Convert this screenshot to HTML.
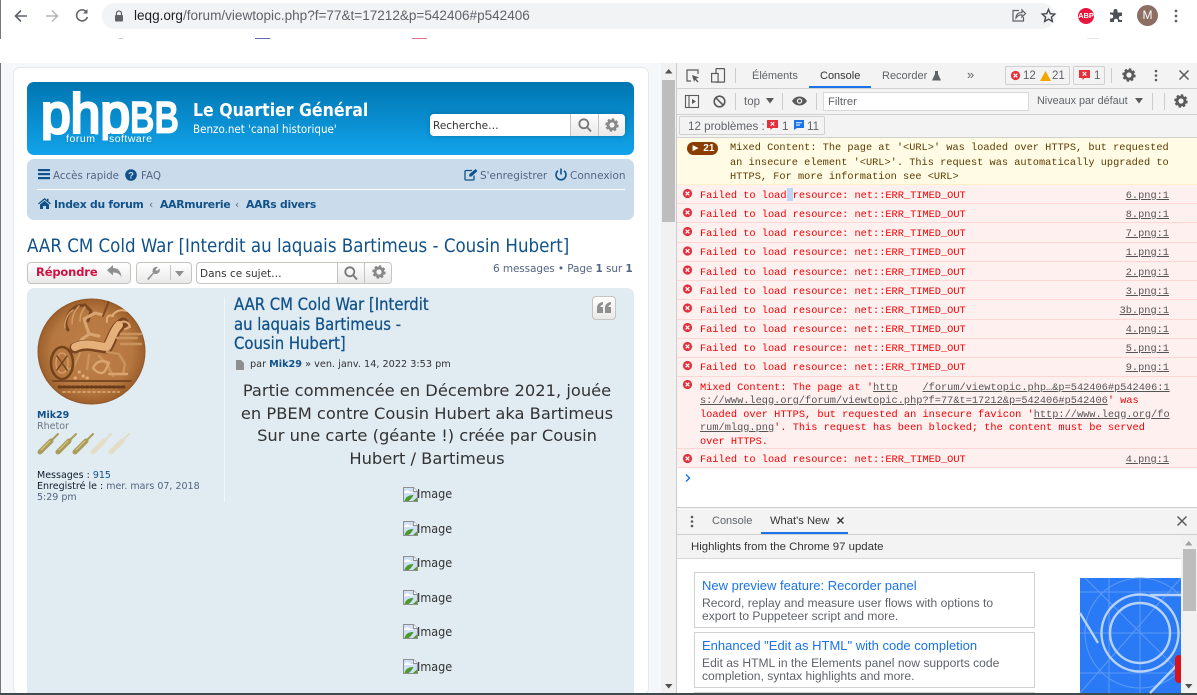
<!DOCTYPE html>
<html><head><meta charset="utf-8"><title>leqg.org</title>
<style>
html,body{margin:0;padding:0;width:1197px;height:695px;overflow:hidden;background:#fff}
.a{position:absolute}
.t{position:absolute;white-space:nowrap;line-height:16px}
.v{font-family:"DejaVu Sans",sans-serif}
.c{font-family:"DejaVu Sans Condensed","Liberation Sans",sans-serif}
.s{font-family:"Liberation Sans",sans-serif}
.m{font-family:"Liberation Mono",monospace;font-size:10.3px;color:#f00000}
.d{font-family:"Liberation Sans",sans-serif;font-size:11px;color:#5f6368}
.row{position:absolute;left:677px;width:520px;background:#fff0f0;border-bottom:1px solid #ffd6d6;box-sizing:border-box}
.lnk{position:absolute;white-space:nowrap;line-height:16px;font-family:"Liberation Mono",monospace;font-size:10.3px;color:#555;text-decoration:underline;text-align:right;right:28px}
svg{position:absolute;overflow:visible}
u{text-decoration:underline}
b{font-weight:bold}
</style></head><body>
<svg width="0" height="0" style="left:0;top:0"><defs>
<g id="bi"><path d="M.5.5h10l4 4v10H.5z" fill="#cfdff5" stroke="#8f8f8f"/><path d="M1 5l3-2 4 2 2 0v1H1z" fill="#fff"/><path d="M1.500 14c1-4 4-6 9-6-1 2-3 5-5 6z" fill="#4c9a2a"/><path d="M10 14l4-3.500V14z" fill="#4c9a2a"/><path d="M10.500 .5v4h4" fill="#fff" stroke="#8f8f8f"/></g>
<g id="er"><circle cx="4.500" cy="4.500" r="4.600" fill="#e5303c"/><path d="M2.700 2.700l3.600 3.600M6.300 2.700 2.700 6.300" stroke="#fff" stroke-width="1.300"/></g>
<g id="gear"><circle cx="7" cy="7" r="4" fill="none" stroke="currentColor" stroke-width="2.800"/><circle cx="7" cy="7" r="5.800" fill="none" stroke="currentColor" stroke-width="1.800" stroke-dasharray="2.500 2"/></g>
</defs></svg>
<!-- browser chrome -->
<div class="a" style="left:0;top:0;width:1197px;height:39px;background:#fff"></div>
<div class="a" style="left:0;top:0;width:1px;height:39px;background:#777"></div>
<div class="a" style="left:102px;top:3px;width:953px;height:26px;border-radius:13px;background:#f1f3f4"></div>
<svg style="left:14px;top:9px" width="16" height="14" fill="none" stroke="#5f6368" stroke-width="1.6"><path d="M13 7H2M7 1.500 1.500 7 7 12.500"/></svg>
<svg style="left:44px;top:9px" width="16" height="14" fill="none" stroke="#b4b7ba" stroke-width="1.5"><path d="M2 7h11M8 1.500 13.500 7 8 12.500"/></svg>
<svg style="left:74px;top:8px" width="16" height="15" fill="none" stroke="#5f6368" stroke-width="1.6"><path d="M12.500 4A5.500 5.500 0 1 0 13.400 9"/><path d="M13.500 1v4.500H9" fill="#5f6368" stroke="none"/></svg>
<svg style="left:114px;top:10px" width="10" height="12"><path d="M2.500 5V3.500a2.500 2.500 0 0 1 5 0V5" fill="none" stroke="#5f6368" stroke-width="1.200"/><rect x="1" y="5" width="8" height="6.500" rx="1" fill="#5f6368"/></svg>
<div class="t s" style="left:134px;top:8px;font-size:13.55px;color:#5f6368"><span style="color:#202124">leqg.org</span>/forum/viewtopic.php?f=77&amp;t=17212&amp;p=542406#p542406</div>
<svg style="left:1011px;top:8px" width="15" height="15" fill="none" stroke="#5f6368" stroke-width="1.200"><path d="M8 2.500H2v10.500h10.500V9"/><path d="M5 10c0-4 3-5.500 6-5.500V2l3.500 3.500L11 9V6.800C8.500 6.800 6.500 7.500 5 10z"/></svg>
<svg style="left:1041px;top:8px" width="15" height="15" fill="none" stroke="#44474a" stroke-width="1.400"><path d="M7.500 1.500 9.300 5.700l4.500.4-3.400 3 1 4.400-3.900-2.300-3.900 2.300 1-4.400-3.400-3 4.500-.4z"/></svg>
<div class="a" style="left:1078px;top:8px;width:16px;height:16px;border-radius:50%;background:#e8173f"></div>
<div class="t s" style="left:1078px;top:8px;width:16px;text-align:center;font-size:7.500px;font-weight:bold;color:#fff">ABP</div>
<svg style="left:1109px;top:8px" width="15" height="15" fill="#4d5156"><path d="M1 4.500h3.500V3a2 2 0 0 1 4 0v1.500H13V8h-1.200a2 2 0 0 0 0 4H13v2H9v-1.200a2 2 0 0 0-4 0V14H1v-3.500h1.200a2 2 0 0 0 0-4H1z"/></svg>
<div class="a" style="left:1137px;top:5px;width:21px;height:21px;border-radius:50%;background:#8d6e63"></div>
<div class="t s" style="left:1137px;top:7px;width:21px;text-align:center;font-size:12px;color:#fff">M</div>
<svg style="left:1174px;top:9px" width="4" height="14" fill="#5f6368"><circle cx="2" cy="2" r="1.400"/><circle cx="2" cy="7" r="1.400"/><circle cx="2" cy="12" r="1.400"/></svg>
<div class="a" style="left:119px;top:38px;width:4px;height:1px;background:#bcc8e8"></div>
<div class="a" style="left:255px;top:38px;width:15px;height:1px;background:#5a6bb0"></div>
<div class="a" style="left:412px;top:38px;width:15px;height:1px;background:#e0708a"></div>
<div class="a" style="left:1087px;top:38px;width:12px;height:1px;background:#e8e8e8"></div>

<!-- page -->
<div class="a" style="left:0;top:63px;width:662px;height:632px;background:#f5f7fa"></div>
<div class="a" style="left:0;top:63px;width:1px;height:632px;background:#777"></div>
<div class="a" style="left:13px;top:67px;width:636px;height:628px;background:#fff;border:1px solid #e6e9ed;border-radius:7px;box-sizing:border-box"></div>
<!-- header -->
<div class="a" style="left:27px;top:82px;width:607px;height:73px;border-radius:7px;background:linear-gradient(#0076b1,#12a3eb)"></div>
<svg style="left:27px;top:82px" width="170" height="73" fill="#fff">
<defs><clipPath id="c"><rect x="0" y="0" width="170" height="58.500"/></clipPath></defs>
<text clip-path="url(#c)" x="14" y="51" font-family="Liberation Sans" font-size="56" stroke="#fff" stroke-width="3" textLength="89" lengthAdjust="spacingAndGlyphs">php</text>
<text x="103" y="51" font-family="Liberation Sans" font-size="45" font-weight="bold" stroke="#fff" stroke-width=".8" textLength="49" lengthAdjust="spacingAndGlyphs">BB</text>
<rect x="38" y="52" width="30" height="10" fill="#0d98dc"/>
<rect x="81" y="52" width="45" height="10" fill="#0d98dc"/>
<text x="39" y="60" font-family="Liberation Sans" font-size="10.500" textLength="29">forum</text>
<text x="82" y="60" font-family="Liberation Sans" font-size="10.500" textLength="43">software</text>
</svg>
<div class="t c" style="left:193px;top:103px;font-size:17.500px;font-weight:bold;color:#fff">Le Quartier Général</div>
<div class="t c" style="left:193px;top:121px;font-size:11.500px;color:#fff">Benzo.net 'canal historique'</div>
<div class="a" style="left:430px;top:114px;width:195px;height:22px;background:#fff;border-radius:4px;box-shadow:0 0 6px rgba(0,0,0,.2)"></div>
<div class="a" style="left:570px;top:114px;width:55px;height:22px;border-radius:0 4px 4px 0;background:linear-gradient(#fff,#e9e9e9)"></div>
<div class="a" style="left:570px;top:114px;width:1px;height:22px;background:#c7c3bf"></div>
<div class="a" style="left:598px;top:114px;width:1px;height:22px;background:#c7c3bf"></div>
<div class="t v" style="left:433px;top:118px;font-size:10.500px;color:#333">Recherche…</div>
<svg style="left:578px;top:118px" width="14" height="14" fill="none" stroke="#777" stroke-width="1.800"><circle cx="5.800" cy="5.800" r="4.500"/><path d="M9 9l4 4.500"/></svg>
<svg style="left:605px;top:118px;color:#888" width="14" height="14"><use href="#gear"/></svg>
<!-- nav -->
<div class="a" style="left:27px;top:159px;width:607px;height:61px;border-radius:7px;background:#cadceb"></div>
<div class="a" style="left:37px;top:189px;width:588px;height:1px;background:#fff"></div>
<svg style="left:38px;top:169px" width="12" height="11" fill="#105289"><rect width="12" height="2.200"/><rect y="4" width="12" height="2.200"/><rect y="8" width="12" height="2.200"/></svg>
<div class="t v" style="left:53px;top:168px;font-size:10.300px;color:#536482">Accès rapide</div>
<svg style="left:125px;top:169px" width="12" height="12"><circle cx="6" cy="6" r="5.800" fill="#105289"/><text x="6" y="9.500" text-anchor="middle" font-size="9.500" font-weight="bold" fill="#cadceb" font-family="Liberation Sans">?</text></svg>
<div class="t v" style="left:141px;top:168px;font-size:10.300px;color:#536482">FAQ</div>
<svg style="left:464px;top:168px" width="14" height="13" fill="none" stroke="#105289" stroke-width="1.300"><path d="M10 7.500V11a1 1 0 0 1-1 1H2a1 1 0 0 1-1-1V3.500a1 1 0 0 1 1-1h6"/><path d="M5 8.500 5.500 6 11.500 1l2 2-6 5.500z" fill="#105289" stroke="none"/></svg>
<div class="t v" style="left:480px;top:168px;font-size:10.500px;color:#536482">S'enregistrer</div>
<svg style="left:555px;top:168px" width="12" height="13" fill="none" stroke="#105289" stroke-width="1.600"><path d="M6 .5v6"/><path d="M3 2.800a5 5 0 1 0 6 0"/></svg>
<div class="t v" style="left:570px;top:168px;font-size:10.500px;color:#536482">Connexion</div>
<svg style="left:38px;top:198px" width="13" height="11" fill="#105289"><path d="M6.500 0 0 5.500l.8.900L6.500 1.700l5.700 4.700.8-.9-2.500-2.100V.8H9v1.200z"/><path d="M2 6.500 6.500 2.800 11 6.500V11H8V8H5v3H2z"/></svg>
<div class="t v" style="left:54px;top:197px;font-size:10.800px;font-weight:bold;color:#105289;letter-spacing:-.25px">Index du forum</div>
<div class="t v" style="left:149px;top:197px;font-size:10.500px;color:#5a6b80">‹</div>
<div class="t v" style="left:160px;top:197px;font-size:10.800px;font-weight:bold;color:#105289;letter-spacing:-.25px">AARmurerie</div>
<div class="t v" style="left:235px;top:197px;font-size:10.500px;color:#5a6b80">‹</div>
<div class="t v" style="left:246px;top:197px;font-size:10.800px;font-weight:bold;color:#105289;letter-spacing:-.25px">AARs divers</div>
<!-- title -->
<div class="t c" style="left:27px;top:239px;font-size:18.550px;color:#105289">AAR CM Cold War [Interdit au laquais Bartimeus - Cousin Hubert]</div>
<!-- buttons -->
<div class="a" style="left:27px;top:262px;width:104px;height:22px;box-sizing:border-box;border:1px solid #c7c3bf;border-radius:4px;background:linear-gradient(#fff,#e9e9e9)"></div>
<div class="t v" style="left:36px;top:264px;font-size:11.500px;font-weight:bold;color:#d31141;letter-spacing:-.15px">Répondre</div>
<svg style="left:107px;top:265px" width="15" height="13" fill="#8f8f8f"><path d="M6 0v3c5 0 8 3 8.500 9.500C13 9 10.500 7.500 6 7.500v3L0 5.200z"/></svg>
<div class="a" style="left:136px;top:262px;width:56px;height:22px;box-sizing:border-box;border:1px solid #c7c3bf;border-radius:4px;background:linear-gradient(#fff,#e9e9e9)"></div>
<div class="a" style="left:170px;top:265px;width:1px;height:15px;background:#c7c3bf"></div>
<svg style="left:146px;top:266px" width="14" height="14" fill="#8f8f8f"><path d="M1 13 7 6.500a4 4 0 0 1 5-5.500L9.500 3.500l1.500 1.500L13.500 2.500a4 4 0 0 1-5.500 5L2.500 14z"/></svg>
<svg style="left:175px;top:271px" width="10" height="6" fill="#8f8f8f"><path d="M0 0h9L4.500 5.500z"/></svg>
<div class="a" style="left:196px;top:262px;width:196px;height:22px;box-sizing:border-box;border:1px solid #c7c3bf;border-radius:4px;background:#fff"></div>
<div class="a" style="left:337px;top:263px;width:54px;height:20px;border-radius:0 3px 3px 0;background:linear-gradient(#fff,#e9e9e9)"></div>
<div class="a" style="left:337px;top:262px;width:1px;height:22px;background:#c7c3bf"></div>
<div class="a" style="left:364px;top:262px;width:1px;height:22px;background:#c7c3bf"></div>
<div class="t v" style="left:200px;top:266px;font-size:10.500px;color:#333">Dans ce sujet…</div>
<svg style="left:344px;top:266px" width="14" height="14" fill="none" stroke="#777" stroke-width="1.800"><circle cx="5.800" cy="5.800" r="4.500"/><path d="M9 9l4 4.500"/></svg>
<svg style="left:372px;top:265px;color:#888" width="14" height="14"><use href="#gear"/></svg>
<div class="t v" style="left:493px;top:260.500px;font-size:10.500px;color:#536482;letter-spacing:-.1px">6 messages • Page <b>1</b> sur <b>1</b></div>
<!-- post -->
<div class="a" style="left:27px;top:288px;width:607px;height:405px;background:#e1ebf2;border-radius:7px 7px 0 0"></div>
<div class="a" style="left:224px;top:297px;width:1px;height:205px;background:#f1f6f9"></div>
<!-- coin -->
<svg style="left:37px;top:298px" width="110" height="108">
<defs><radialGradient id="g" cx=".5" cy=".5" r=".52"><stop offset="0" stop-color="#bd7f48"/><stop offset=".72" stop-color="#b67840"/><stop offset=".93" stop-color="#a0622e"/><stop offset="1" stop-color="#74431c"/></radialGradient>
<clipPath id="cc"><ellipse cx="54.500" cy="53.500" rx="54" ry="53"/></clipPath></defs>
<ellipse cx="54.500" cy="53.500" rx="54" ry="53" fill="url(#g)"/>
<g clip-path="url(#cc)" fill="none" stroke-linecap="round" stroke-linejoin="round">
<path d="M31 32C26 25 30 14 40 8l8-1 6 6-3 10" stroke="#7a4520" stroke-width="3"/>
<path d="M36 12C30 16 27 24 28 30M42 8c-5 5-7 12-7 18M48 9c-4 5-5 10-5 14" stroke="#d19b66" stroke-width="1.500"/>
<path d="M47 21 52 36l10 2M47 21l11-6 8 2M52 36l-8 6" stroke="#d9a470" stroke-width="3"/>
<path d="M66 18 72 3" stroke="#7a4520" stroke-width="1.800"/>
<path d="M38 50C50 44 62 50 70 50c4-6 6-16 12-22l4-3" stroke="#7a4520" stroke-width="11"/>
<path d="M38 49C50 43 62 49 70 49c4-6 6-16 12-22" stroke="#e6b07a" stroke-width="8"/>
<path d="M82 25c5-3 10-1 11 4l-5 2M75 18c3-5 9-7 14-5M70 24c-1-5 2-8 6-6" stroke="#e0aa74" stroke-width="2"/>
<path d="M43 55 36 70l-5 1M52 57l-2 14M70 54l12 2 6 10-2 10M62 58l8 8 6 12M80 40h20M84 46h20M84 36h20" stroke="#c9935d" stroke-width="2.400"/>
<ellipse cx="25" cy="65" rx="11" ry="16" stroke="#74431c" stroke-width="2.600"/>
<ellipse cx="25" cy="65" rx="6" ry="10" stroke="#d19b66" stroke-width="1.500"/>
<path d="M20 58l10 14M30 58 20 72" stroke="#74431c" stroke-width="1.500"/>
<path d="M56 70c4-8 10-8 16-5l-3 6c-2 5-7 6-13-1zM72 76h18" stroke="#d9a470" stroke-width="2.400"/>
<path d="M42 74h.5M46 78h.5M50 80h.5M38 80h.5" stroke="#e0aa74" stroke-width="3"/>
<path d="M16 83h78" stroke="#74431c" stroke-width="1.800"/>
<path d="M22 89h66" stroke="#6a3b18" stroke-width="3" stroke-dasharray="2 2.500"/>
<path d="M26 94h56" stroke="#d19b66" stroke-width="2" stroke-dasharray="2 3"/>
</g></svg>
<div class="t v" style="left:37px;top:408px;font-size:9.500px;font-weight:bold;color:#105289">Mik29</div>
<div class="t v" style="left:37px;top:419px;font-size:9.500px;color:#6a7682">Rhetor</div>
<svg style="left:37px;top:431px" width="95" height="24" stroke-linecap="round">
<g stroke="#a99c58"><path d="M3 21 14 10M21 21 32 10M38 21 49 10" stroke-width="5"/><path d="M14 10 21 3M32 10 39 3M49 10 56 3" stroke-width="2"/></g>
<g stroke="#e4dcc5"><path d="M56 21 67 10M74 21 85 10" stroke-width="5"/><path d="M67 10 74 3M85 10 92 3" stroke-width="2"/></g>
<g stroke="#d8cc8a" stroke-width="1"><path d="M4 19 13 10M22 19 31 10M39 19 48 10"/></g></svg>
<div class="t v" style="left:37px;top:468px;font-size:9.500px;color:#0f1d2b">Messages : <span style="color:#105289">915</span></div>
<div class="t v" style="left:37px;top:479px;font-size:9.500px;color:#0f1d2b">Enregistré le : <span style="color:#536482">mer. mars 07, 2018</span></div>
<div class="t v" style="left:37px;top:490px;font-size:9.500px;color:#536482">5:29 pm</div>

<div class="t c" style="left:234px;top:295px;font-size:16.500px;color:#105289;line-height:19.700px;-webkit-text-stroke:.25px #105289">AAR CM Cold War [Interdit<br>au laquais Bartimeus -<br>Cousin Hubert]</div>
<div class="a" style="left:592px;top:296px;width:24px;height:24px;box-sizing:border-box;border:1px solid #c7c3bf;border-radius:4px;background:linear-gradient(#fff,#e9e9e9)"></div>
<svg style="left:597px;top:302px" width="14" height="12" fill="#8f8f8f"><path d="M0 6C0 2.500 2 .5 6 0v2.500C4 3 3.500 4 3.500 5H6v6H0zM8 6c0-3.500 2-5.500 6-6v2.500C12 3 11.500 4 11.500 5H14v6H8z"/></svg>
<svg style="left:236px;top:360px" width="8" height="10" fill="#8f8f8f"><path d="M0 0h5l3 3v7H0z"/></svg>
<div class="t v" style="left:250px;top:356.500px;font-size:9.700px;color:#333">par <b style="color:#105289">Mik29</b> » ven. janv. 14, 2022 3:53 pm</div>
<div class="a v" style="left:234px;top:380px;width:386px;text-align:center;line-height:22.600px;color:#333;font-size:16.300px">Partie commencée en Décembre 2021, jouée<br>en PBEM contre Cousin Hubert aka Bartimeus<br>Sur une carte (géante !) créée par Cousin<br>Hubert / Bartimeus</div>

<!-- broken images -->
<svg style="left:403px;top:487px" width="15" height="15"><use href="#bi"/></svg><div class="t c" style="left:417px;top:486px;font-size:12.500px;color:#333">Image</div>
<svg style="left:403px;top:521px" width="15" height="15"><use href="#bi"/></svg><div class="t c" style="left:417px;top:521px;font-size:12.500px;color:#333">Image</div>
<svg style="left:403px;top:556px" width="15" height="15"><use href="#bi"/></svg><div class="t c" style="left:417px;top:555px;font-size:12.500px;color:#333">Image</div>
<svg style="left:403px;top:590px" width="15" height="15"><use href="#bi"/></svg><div class="t c" style="left:417px;top:590px;font-size:12.500px;color:#333">Image</div>
<svg style="left:403px;top:624px" width="15" height="15"><use href="#bi"/></svg><div class="t c" style="left:417px;top:624px;font-size:12.500px;color:#333">Image</div>
<svg style="left:403px;top:659px" width="15" height="15"><use href="#bi"/></svg><div class="t c" style="left:417px;top:659px;font-size:12.500px;color:#333">Image</div>
<div class="a" style="left:0;top:693px;width:1197px;height:2px;background:#3f4a4f"></div>

<!-- page scrollbar -->
<div class="a" style="left:661px;top:63px;width:15px;height:630px;background:#f1f1f1"></div>
<div class="a" style="left:662px;top:80px;width:13px;height:142px;background:#bdbdbd"></div>
<svg style="left:665px;top:69px" width="8" height="5" fill="#505050"><path d="M0 4.500h7.500L3.700 0z"/></svg>
<svg style="left:665px;top:684px" width="8" height="5" fill="#505050"><path d="M0 0h7.500L3.700 4.500z"/></svg>

<!-- devtools -->
<div class="a" style="left:676px;top:63px;width:1px;height:630px;background:#ccc"></div>
<div class="a" style="left:677px;top:63px;width:520px;height:630px;background:#fff"></div>
<div class="a" style="left:677px;top:63px;width:520px;height:25px;background:#f3f3f3;border-bottom:1px solid #d0d0d0"></div>
<div class="a" style="left:677px;top:89px;width:520px;height:25px;background:#f3f3f3;border-bottom:1px solid #d0d0d0"></div>
<div class="a" style="left:677px;top:115px;width:520px;height:22px;background:#f3f3f3;border-bottom:1px solid #d0d0d0"></div>
<svg style="left:686px;top:69px" width="14" height="14" fill="none" stroke="#5a5a5a" stroke-width="1.200"><path d="M5 12H1V1h11v4"/><path d="M6 6l7 2.500-3 1.200 2.500 2.800-1 1-2.500-2.800L8 13z" fill="#5a5a5a" stroke="none"/></svg>
<svg style="left:711px;top:68px" width="15" height="15" fill="none" stroke="#5a5a5a" stroke-width="1.200"><rect x="5" y=".6" width="8.500" height="13.500" rx=".5"/><rect x=".6" y="5.500" width="6.500" height="8.500" fill="#f3f3f3"/></svg>
<div class="a" style="left:735px;top:68px;width:1px;height:15px;background:#ccc"></div>
<div class="t d" style="left:752px;top:68px">Éléments</div>
<div class="t d" style="left:820px;top:68px;color:#333">Console</div>
<div class="a" style="left:809px;top:86px;width:62px;height:2px;background:#1a73e8"></div>
<div class="t d" style="left:882px;top:68px">Recorder</div>
<svg style="left:932px;top:71px" width="9" height="10" fill="#5f6368"><path d="M3 0h3v3l3 6.500H0L3 3z"/></svg>
<div class="t d" style="left:967px;top:67px;font-size:13px">»</div>
<div class="a" style="left:1005px;top:66px;width:65px;height:19px;box-sizing:border-box;border:1px solid #d0d0d0;border-radius:2px"></div>
<div class="a" style="left:1073px;top:66px;width:32px;height:19px;box-sizing:border-box;border:1px solid #d0d0d0;border-radius:2px"></div>
<svg style="left:1011px;top:71px" width="9" height="9"><use href="#er"/></svg>
<div class="t d" style="left:1023px;top:68px;font-size:11.500px">12</div>
<svg style="left:1040px;top:71px" width="11" height="10" fill="#f2a600"><path d="M5.500 0 11 10H0z"/></svg>
<div class="t d" style="left:1052px;top:68px;font-size:11.500px">21</div>
<svg style="left:1079px;top:70px" width="11" height="10"><path d="M0 0h11v8H5.500l-2 2V8H0z" fill="#e5303c"/><path d="M3.700 2l3.600 3.600M7.300 2 3.700 5.600" stroke="#fff" stroke-width="1.100"/></svg>
<div class="t d" style="left:1094px;top:68px;font-size:11.500px">1</div>
<div class="a" style="left:1111px;top:68px;width:1px;height:15px;background:#ccc"></div>
<svg style="left:1122px;top:68px;color:#5a5a5a" width="14" height="14"><use href="#gear"/></svg>
<svg style="left:1154px;top:69px" width="4" height="13" fill="#5a5a5a"><circle cx="2" cy="2" r="1.300"/><circle cx="2" cy="6.500" r="1.300"/><circle cx="2" cy="11" r="1.300"/></svg>
<svg style="left:1179px;top:70px" width="10" height="10" stroke="#5a5a5a" stroke-width="1.500"><path d="M.5.500l9 9M9.500.500l-9 9"/></svg>

<svg style="left:685px;top:95px" width="14" height="13" fill="none" stroke="#5a5a5a" stroke-width="1.100"><rect x=".5" y=".5" width="13" height="12"/><path d="M4 .5v12"/><path d="M7 4l4 2.500L7 9z" fill="#5a5a5a" stroke="none"/></svg>
<svg style="left:713px;top:95px" width="13" height="13" fill="none" stroke="#5a5a5a" stroke-width="1.600"><circle cx="6.500" cy="6.500" r="5.300"/><path d="M2.800 2.800l7.400 7.400"/></svg>
<div class="a" style="left:735px;top:93px;width:1px;height:17px;background:#ccc"></div>
<div class="t d" style="left:744px;top:94px;font-size:11.500px">top</div>
<svg style="left:766px;top:98px" width="8" height="6" fill="#5a5a5a"><path d="M0 0h8L4 5.500z"/></svg>
<div class="a" style="left:782px;top:93px;width:1px;height:17px;background:#ccc"></div>
<svg style="left:792px;top:96px" width="15" height="10"><path d="M0 5c3.500-6 11.500-6 15 0-3.500 6-11.500 6-15 0z" fill="#5a5a5a"/><circle cx="7.500" cy="5" r="2.700" fill="#f3f3f3"/><circle cx="7.500" cy="5" r="1.500" fill="#5a5a5a"/></svg>
<div class="a" style="left:816px;top:93px;width:1px;height:17px;background:#ccc"></div>
<div class="a" style="left:823px;top:92px;width:206px;height:19px;box-sizing:border-box;background:#fff;border:1px solid #d8d8d8"></div>
<div class="t d" style="left:828px;top:94px;font-size:11.300px">Filtrer</div>
<div class="t d" style="left:1037px;top:93px;font-size:10.800px">Niveaux par défaut</div>
<svg style="left:1135px;top:98px" width="8" height="6" fill="#5a5a5a"><path d="M0 0h8L4 5.500z"/></svg>
<div class="a" style="left:1152px;top:93px;width:1px;height:17px;background:#ccc"></div>
<div class="a" style="left:1164px;top:93px;width:1px;height:17px;background:#ccc"></div>
<svg style="left:1174px;top:94px;color:#5a5a5a" width="14" height="14"><use href="#gear"/></svg>

<div class="a" style="left:679px;top:116px;width:146px;height:19px;box-sizing:border-box;border:1px solid #d0d0d0;border-radius:2px"></div>
<div class="t d" style="left:688px;top:118.500px;font-size:11.600px">12 problèmes :</div>
<svg style="left:767px;top:120px" width="11" height="10"><path d="M0 0h11v8H5.500l-2 2V8H0z" fill="#e5303c"/><path d="M3.700 2l3.600 3.600M7.300 2 3.700 5.600" stroke="#fff" stroke-width="1.100"/></svg>
<div class="t d" style="left:782px;top:118.500px;font-size:11.600px">1</div>
<svg style="left:794px;top:120px" width="10" height="10"><path d="M0 0h10v8H3L0 10z" fill="#1a73e8"/><path d="M2 2.800h6M2 5h4" stroke="#fff"/></svg>
<div class="t d" style="left:807px;top:118.500px;font-size:11.600px">11</div>

<div class="a" style="left:677px;top:138px;width:520px;height:47px;background:#fffbe5;border-bottom:1px solid #fff0c8;box-sizing:border-box"></div>
<div class="a" style="left:687px;top:142px;width:31px;height:13px;border-radius:7px;background:#8b3d00"></div>
<div class="t s" style="left:687px;top:141px;width:31px;text-align:center;font-size:10px;font-weight:bold;color:#fff">► 21</div>
<div class="a m" style="left:730px;top:141px;color:#5c3b00;line-height:14.500px;white-space:nowrap">Mixed Content: The page at '&lt;URL&gt;' was loaded over HTTPS, but requested<br>an insecure element '&lt;URL&gt;'. This request was automatically upgraded to<br>HTTPS, For more information see &lt;URL&gt;</div>

<div class="row" style="top:185px;height:19px"></div>
<div class="row" style="top:204px;height:19px"></div>
<div class="row" style="top:223px;height:20px"></div>
<div class="row" style="top:243px;height:19px"></div>
<div class="row" style="top:262px;height:19px"></div>
<div class="row" style="top:281px;height:19px"></div>
<div class="row" style="top:300px;height:20px"></div>
<div class="row" style="top:320px;height:19px"></div>
<div class="row" style="top:339px;height:19px"></div>
<div class="row" style="top:358px;height:19px"></div>
<div class="row" style="top:377px;height:72px"></div>
<div class="row" style="top:449px;height:19px"></div>
<div class="a" style="left:787px;top:188px;width:6px;height:13px;background:#bcd7f5"></div>

<svg style="left:683px;top:189px" width="9" height="300">
<use href="#er" y="0"/><use href="#er" y="19"/><use href="#er" y="38"/><use href="#er" y="57.500"/><use href="#er" y="76.500"/><use href="#er" y="95.500"/><use href="#er" y="114.500"/><use href="#er" y="134"/><use href="#er" y="153"/><use href="#er" y="172"/><use href="#er" y="191"/><use href="#er" y="265"/>
</svg>
<div class="t m" style="left:700px;top:188px">Failed to load resource: net::ERR_TIMED_OUT</div><div class="lnk" style="top:188px">6.png:1</div>
<div class="t m" style="left:700px;top:207px">Failed to load resource: net::ERR_TIMED_OUT</div><div class="lnk" style="top:207px">8.png:1</div>
<div class="t m" style="left:700px;top:226px">Failed to load resource: net::ERR_TIMED_OUT</div><div class="lnk" style="top:226px">7.png:1</div>
<div class="t m" style="left:700px;top:245px">Failed to load resource: net::ERR_TIMED_OUT</div><div class="lnk" style="top:245px">1.png:1</div>
<div class="t m" style="left:700px;top:265px">Failed to load resource: net::ERR_TIMED_OUT</div><div class="lnk" style="top:265px">2.png:1</div>
<div class="t m" style="left:700px;top:284px">Failed to load resource: net::ERR_TIMED_OUT</div><div class="lnk" style="top:284px">3.png:1</div>
<div class="t m" style="left:700px;top:303px">Failed to load resource: net::ERR_TIMED_OUT</div><div class="lnk" style="top:303px">3b.png:1</div>
<div class="t m" style="left:700px;top:322px">Failed to load resource: net::ERR_TIMED_OUT</div><div class="lnk" style="top:322px">4.png:1</div>
<div class="t m" style="left:700px;top:341px">Failed to load resource: net::ERR_TIMED_OUT</div><div class="lnk" style="top:341px">5.png:1</div>
<div class="t m" style="left:700px;top:360px">Failed to load resource: net::ERR_TIMED_OUT</div><div class="lnk" style="top:360px">9.png:1</div>
<div class="a m" style="left:700px;top:381.500px;line-height:13.500px;white-space:pre">Mixed Content: The page at '<u style="color:#555">http</u>    <u style="color:#555">/forum/viewtopic.php…&amp;p=542406#p542406:1</u>
<u style="color:#555">s://www.leqg.org/forum/viewtopic.php?f=77&amp;t=17212&amp;p=542406#p542406</u>' was
loaded over HTTPS, but requested an insecure favicon '<u style="color:#555">http://www.leqg.org/fo</u>
<u style="color:#555">rum/mlqg.png</u>'. This request has been blocked; the content must be served
over HTTPS.</div>
<div class="t m" style="left:700px;top:452px">Failed to load resource: net::ERR_TIMED_OUT</div><div class="lnk" style="top:452px">4.png:1</div>
<svg style="left:685px;top:474px" width="6" height="8" fill="none" stroke="#1a73e8" stroke-width="1.400"><path d="M1 .5 4.500 4 1 7.500"/></svg>

<!-- drawer -->
<div class="a" style="left:677px;top:507px;width:520px;height:1px;background:#ccc"></div>
<div class="a" style="left:677px;top:508px;width:520px;height:26px;background:#f3f3f3;border-bottom:1px solid #d0d0d0"></div>
<svg style="left:690px;top:515px" width="4" height="13" fill="#5a5a5a"><circle cx="2" cy="2" r="1.300"/><circle cx="2" cy="6.500" r="1.300"/><circle cx="2" cy="11" r="1.300"/></svg>
<div class="t d" style="left:712px;top:513px">Console</div>
<div class="t d" style="left:770px;top:513px;color:#333;font-size:11.200px">What's New</div>
<svg style="left:837px;top:517px" width="7" height="7" stroke="#333" stroke-width="1.400"><path d="M.5.500l6 6M6.500.500l-6 6"/></svg>
<div class="a" style="left:761px;top:532px;width:87px;height:2px;background:#1a73e8"></div>
<svg style="left:1177px;top:516px" width="10" height="10" stroke="#5a5a5a" stroke-width="1.500"><path d="M.5.500l9 9M9.500.500l-9 9"/></svg>
<div class="a" style="left:677px;top:535px;width:505px;height:23px;background:#f3f3f3;border-bottom:1px solid #d8d8d8"></div>
<div class="t d" style="left:691px;top:539px;color:#333;font-size:11.400px">Highlights from the Chrome 97 update</div>

<div class="a" style="left:694px;top:572px;width:341px;height:56px;box-sizing:border-box;border:1px solid #d0d0d0"></div>
<div class="t s" style="left:702px;top:578px;font-size:13px;color:#1a73e8">New preview feature: Recorder panel</div>
<div class="a s" style="left:702px;top:597px;font-size:12.100px;line-height:12.800px;color:#5f6368;white-space:nowrap">Record, replay and measure user flows with options to<br>export to Puppeteer script and more.</div>
<div class="a" style="left:694px;top:632px;width:341px;height:56px;box-sizing:border-box;border:1px solid #d0d0d0"></div>
<div class="t s" style="left:702px;top:638px;font-size:13px;color:#1a73e8">Enhanced "Edit as HTML" with code completion</div>
<div class="a s" style="left:702px;top:657px;font-size:12.100px;line-height:12.800px;color:#5f6368;white-space:nowrap">Edit as HTML in the Elements panel now supports code<br>completion, syntax highlights and more.</div>
<div class="a" style="left:694px;top:692px;width:341px;height:1px;background:#d0d0d0"></div>

<svg style="left:1080px;top:578px" width="101" height="115">
<rect width="101" height="115" fill="#2a7af5"/>
<g stroke="#5c9af7" fill="none" stroke-width="1"><path d="M0 14h101M0 55h101M0 95h101M29 0v115M60 0v115M5 0l96 95M101 0 0 115"/><circle cx="60" cy="55" r="55"/></g>
<g stroke="#b8d3fb" fill="none" stroke-width="2.400"><circle cx="60" cy="55" r="30"/><circle cx="60" cy="55" r="38.500"/><path d="M0 35 18 65M70 17h31M100 84l-30 31"/></g>
<rect x="95" y="77" width="8" height="28" rx="4" fill="#d9111a"/>
</svg>
<div class="a" style="left:1181px;top:535px;width:16px;height:158px;background:#f1f1f1"></div>
<div class="a" style="left:1183px;top:549px;width:13px;height:62px;background:#bdbdbd"></div>
<svg style="left:1185px;top:541px" width="8" height="5" fill="#a0a0a0"><path d="M0 4.500h7.500L3.700 0z"/></svg>
<svg style="left:1185px;top:684px" width="8" height="5" fill="#505050"><path d="M0 0h7.500L3.700 4.500z"/></svg>
</body></html>
